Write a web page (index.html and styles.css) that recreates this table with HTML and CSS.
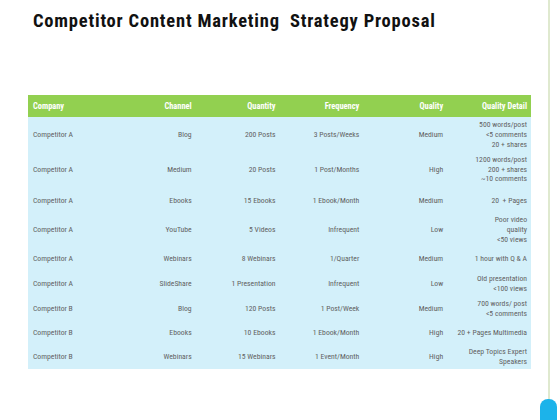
FILE: index.html
```html
<!DOCTYPE html>
<html>
<head>
<meta charset="utf-8">
<link rel="stylesheet" href="styles.css">
</head>
<body>
<div class="page">
  <main class="main">
    <h1 class="title">Competitor Content Marketing&nbsp; Strategy Proposal</h1>
    <table class="grid">
      <thead>
        <tr class="head">
          <th class="left">Company</th>
          <th>Channel</th>
          <th>Quantity</th>
          <th>Frequency</th>
          <th>Quality</th>
          <th>Quality Detail</th>
        </tr>
      </thead>
      <tbody>
        <tr class="r1"><td class="left">Competitor A</td><td>Blog</td><td>200 Posts</td><td>3 Posts/Weeks</td><td>Medium</td><td>500 words/post<br>&lt;5 comments<br>20 + shares</td></tr>
        <tr class="r2"><td class="left">Competitor A</td><td>Medium</td><td>20 Posts</td><td>1 Post/Months</td><td>High</td><td>1200 words/post<br>200 + shares<br>~10 comments</td></tr>
        <tr class="r3"><td class="left">Competitor A</td><td>Ebooks</td><td>15 Ebooks</td><td>1 Ebook/Month</td><td>Medium</td><td>20&nbsp; + Pages</td></tr>
        <tr class="r4"><td class="left">Competitor A</td><td>YouTube</td><td>5 Videos</td><td>Infrequent</td><td>Low</td><td>Poor video<br>quality<br>&lt;50 views</td></tr>
        <tr class="r5"><td class="left">Competitor A</td><td>Webinars</td><td>8 Webinars</td><td>1/Quarter</td><td>Medium</td><td>1 hour with Q &amp; A</td></tr>
        <tr class="r6"><td class="left">Competitor A</td><td>SlideShare</td><td>1 Presentation</td><td>Infrequent</td><td>Low</td><td>Old presentation<br>&lt;100 views</td></tr>
        <tr class="r7"><td class="left">Competitor B</td><td>Blog</td><td>120 Posts</td><td>1 Post/Week</td><td>Medium</td><td>700 words/ post<br>&lt;5 comments</td></tr>
        <tr class="r8"><td class="left">Competitor B</td><td>Ebooks</td><td>10 Ebooks</td><td>1 Ebook/Month</td><td>High</td><td>20 + Pages Multimedia</td></tr>
        <tr class="r9"><td class="left">Competitor B</td><td>Webinars</td><td>15 Webinars</td><td>1 Event/Month</td><td>High</td><td>Deep Topics Expert<br>Speakers</td></tr>
      </tbody>
    </table>
  </main>
  <aside class="rail">
    <div class="rail-line"></div>
    <div class="rail-tab"></div>
  </aside>
</div>
</body>
</html>
```
FILE: styles.css
```css
html, body {
  margin: 0;
  padding: 0;
  background: #ffffff;
}
.page {
  display: flex;
  width: 560px;
  height: 420px;
  overflow: hidden;
}
.main {
  width: 540px;
  flex: none;
}
.title {
  margin: 10px 0 0 33px;
  font-family: Roboto, "Liberation Sans", sans-serif;
  font-stretch: 85%;
  font-weight: bold;
  font-size: 18.5px;
  line-height: 22px;
  letter-spacing: 0.8px;
  color: #111111;
  white-space: nowrap;
}
.grid {
  margin: 63px 0 0 28px;
  width: 503px;
  border-collapse: collapse;
  table-layout: fixed;
  font-family: Roboto, "Liberation Sans", sans-serif;
  font-stretch: 82%;
}
.grid th, .grid td {
  padding: 0 4px 0 5px;
  text-align: right;
  vertical-align: middle;
  white-space: nowrap;
}
.grid .left {
  text-align: left;
}
.head {
  background: #92d050;
  height: 22px;
}
.head th {
  color: #ffffff;
  font-weight: bold;
  font-size: 8.4px;
  line-height: 10px;
}
tbody tr {
  background: #d3f0fa;
}
tbody td {
  color: #626262;
  font-size: 7.7px;
  line-height: 9.8px;
}
.r1 { height: 36px; }
.r2 { height: 33px; }
.r3 { height: 29px; }
.r4 { height: 30px; }
.r5 { height: 27px; }
.r6 { height: 24px; }
.r7 { height: 25px; }
.r8 { height: 24px; }
.r9 { height: 24px; }
.rail {
  width: 17px;
  flex: none;
  display: flex;
  flex-direction: column;
  align-items: center;
}
.rail-line {
  flex: 1;
  width: 2px;
  background: #dfe9cf;
}
.rail-tab {
  width: 17px;
  height: 21px;
  background: #1cb3ea;
  border-radius: 8px 8px 0 0;
}
```
